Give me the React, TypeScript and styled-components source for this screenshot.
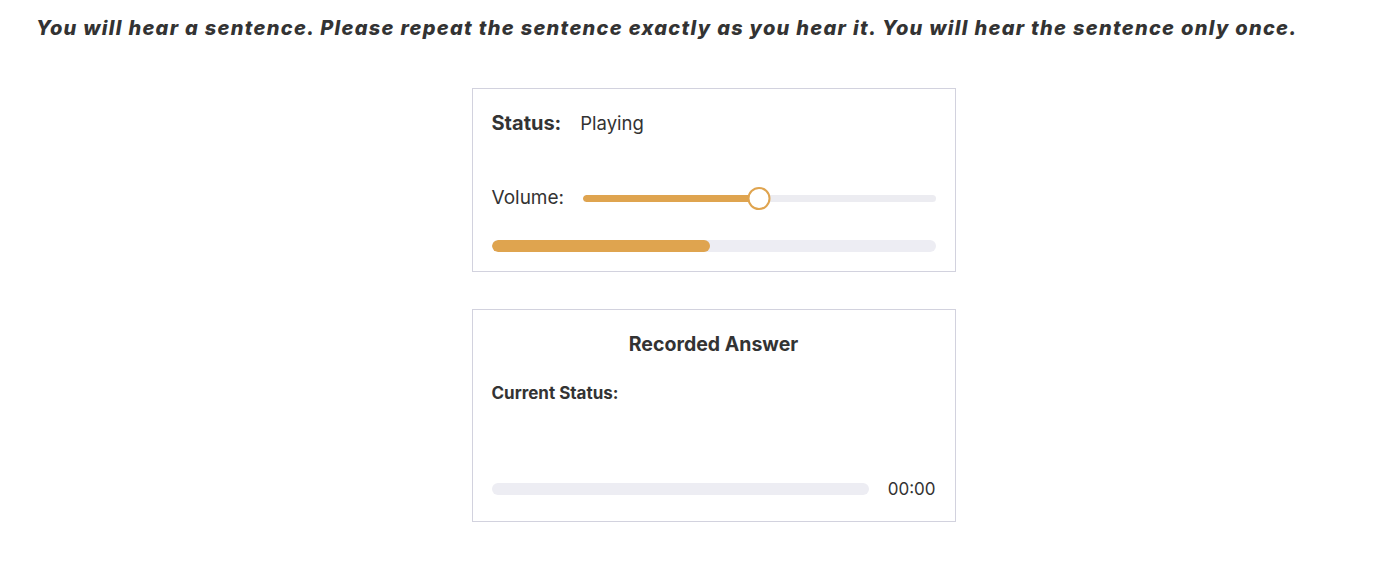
import styled, { createGlobalStyle } from "styled-components";

const GlobalStyle = createGlobalStyle`
    html, body {
        margin:0;
        padding:0;
        background:#ffffff;
        font-family: Inter, "Noto Sans", sans-serif;
        color:#333333;
    }
`;

const Page = styled.div`
    width:100%;
    padding-top:16px;
`;
const Instruction = styled.h1`
    margin:0;
    padding-left:36px;
    font-size:20px;
    line-height:24px;
    font-weight:800;
    font-style:italic;
    letter-spacing:1.3px;
    color:#333333;
    white-space:nowrap;
`;
const Main = styled.div`
    display:flex;
    flex-direction:column;
    align-items:center;
    gap:37px;
    margin-top:48px;
    padding-left:27px;
`;
const Card = styled.div<{ bottom?: number }>`
    width:444px;
    border:1px solid #d2d2de;
    padding:22px 19px ${(props) => props.bottom || 19}px;
    display:flex;
    flex-direction:column;
`;
const Row = styled.div<{ top?: number }>`
    display:flex;
    align-items:center;
    gap:19px;
    margin-top:${(props) => props.top || 0}px;
`;
const Label = styled.span<{ bold?: boolean; size?: number }>`
    font-size:${(props) => props.size || 18}px;
    line-height:24px;
    font-weight:${(props) => (props.bold ? 700 : 400)};
    white-space:nowrap;
`;
const Slider = styled.div`
    position:relative;
    flex:1;
    height:23px;
    display:flex;
    align-items:center;
`;
const SliderTrack = styled.div`
    width:100%;
    height:7px;
    border-radius:4px;
    background:#ececf1;
    overflow:hidden;
`;
const SliderFill = styled.div`
    height:100%;
    background:#dfa44f;
    border-radius:4px;
`;
const Thumb = styled.div`
    position:absolute;
    top:0;
    width:23px;
    height:23px;
    box-sizing:border-box;
    border:2px solid #dfa44f;
    border-radius:50%;
    background:#ffffff;
    transform:translateX(-50%);
`;
const Bar = styled.div<{ top?: number; grow?: boolean }>`
    flex:${(props) => (props.grow ? "1 1 auto" : "none")};
    height:12px;
    border-radius:6px;
    background:#ededf3;
    overflow:hidden;
    margin-top:${(props) => props.top || 0}px;
`;
const BarFill = styled.div`
    height:100%;
    background:#dfa44f;
    border-radius:6px;
`;
const Title = styled.div`
    text-align:center;
    font-size:19.5px;
    line-height:24px;
    font-weight:700;
`;

const App = () => {
    const volume = 50;
    const progress = 49.1;

    return (
        <Page>
            <GlobalStyle />
            <Instruction>
                You will hear a sentence. Please repeat the sentence exactly as you hear it. You will hear the sentence only once.
            </Instruction>
            <Main>
                <Card>
                    <Row>
                        <Label bold size={20}>Status:</Label>
                        <Label size={18.5}>Playing</Label>
                    </Row>
                    <Row top={51}>
                        <Label size={19}>Volume:</Label>
                        <Slider>
                            <SliderTrack>
                                <SliderFill style={{ width: `${volume}%` }} />
                            </SliderTrack>
                            <Thumb style={{ left: `${volume}%` }} />
                        </Slider>
                    </Row>
                    <Bar top={30}>
                        <BarFill style={{ width: `${progress}%` }} />
                    </Bar>
                </Card>
                <Card bottom={20}>
                    <Title>Recorded Answer</Title>
                    <Row top={25}>
                        <Label bold size={17}>Current Status:</Label>
                    </Row>
                    <Row top={72}>
                        <Bar grow />
                        <Label size={17}>00:00</Label>
                    </Row>
                </Card>
            </Main>
        </Page>
    );
};

export default App;
